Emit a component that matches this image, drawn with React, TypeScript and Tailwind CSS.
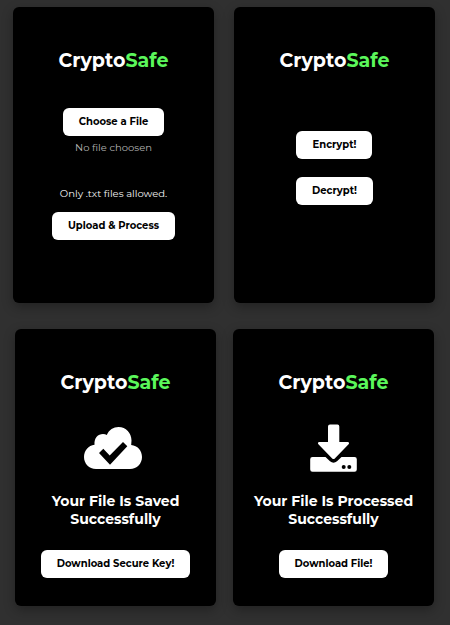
import React from "react";

function Card({ children, className = "" }: { children: React.ReactNode; className?: string }) {
  return (
    <section
      className={`flex min-w-0 flex-1 flex-col items-center rounded-md bg-black pt-10 text-center shadow-[0_4px_12px_rgba(0,0,0,0.3)] ${className}`}
    >
      <h1 className="text-[19px] leading-7 font-bold">
        Crypto<span className="text-[#5bf75b]">Safe</span>
      </h1>
      {children}
    </section>
  );
}

function Button({ children }: { children: React.ReactNode }) {
  return (
    <button type="button" className="h-7 rounded-md bg-white px-4 text-[10px] leading-4 font-bold whitespace-nowrap text-black">
      {children}
    </button>
  );
}

function CloudCheck() {
  return (
    <svg viewBox="0 0 64 42" className="h-[42px] w-16" aria-hidden="true">
      <path
        fill="#fff"
        d="M12 42C5 42 0 36.500 0 30C0 23.500 4.500 18.500 10.500 17.700C10 11 14 7 19 7C20.500 7 21.700 7.300 22.800 7.900C25 3 29.500 0 34.500 0C42 0 47.500 6 47.500 13.500L47.200 18C53.500 18.500 58 23.500 58 30C58 36.500 53 42 46 42Z"
      />
      <path d="M15 26L19.300 21.800L25.700 28.500L39 15L43.300 19.300L26 37.700Z" fill="#000" />
    </svg>
  );
}

function DownloadTray() {
  return (
    <svg viewBox="0 0 47 48" className="h-12 w-[47px]" aria-hidden="true">
      <path
        fill="#fff"
        d="M20 0.500H27.500Q29.300 0.500 29.300 2.500V18H37.500Q40 18.300 38.600 20.300L24.800 34.400Q23.500 35.600 22.200 34.400L8.400 20.300Q7 18.300 9.500 18H18V2.500Q18 0.500 20 0.500Z"
      />
      <path
        fill="#fff"
        d="M2.500 33H15.500L20 37.300Q23.500 40.200 27 37.300L31.500 33H44.500Q46.800 33 46.800 35.200V45.500Q46.800 47.700 44.500 47.700H2.500Q0.200 47.700 0.200 45.500V35.200Q0.200 33 2.500 33Z"
      />
      <circle cx="33.700" cy="43" r="2" fill="#000" />
      <circle cx="39.300" cy="43" r="2" fill="#000" />
    </svg>
  );
}

export default function App() {
  return (
    <main className="min-h-screen bg-[#303030] pt-[7px] pb-[19px] font-['Montserrat','Inter',sans-serif] text-white">
      <div className="flex gap-5 pr-[15px] pl-[13px]">
        <Card className="pb-[63px]">
          <div className="mt-[33px] flex flex-col items-center">
            <Button>Choose a File</Button>
            <p className="mt-1 text-[10px] leading-4 text-[#b3b3b3]">No file choosen</p>
          </div>
          <p className="mt-[30px] mb-[10px] text-[10px] leading-4 text-[#f5f5f5]">Only .txt files allowed.</p>
          <Button>Upload &amp; Process</Button>
        </Card>
        <Card>
          <div className="mt-14 flex flex-col items-center gap-[18px]">
            <Button>Encrypt!</Button>
            <Button>Decrypt!</Button>
          </div>
        </Card>
      </div>

      <div className="mt-[26px] flex gap-[17px] pr-4 pl-[15px]">
        <Card className="pb-7">
          <div className="mt-[27px] flex h-12 items-center">
            <CloudCheck />
          </div>
          <h2 className="mt-5 mb-[22px] text-[14px] leading-[18px] font-bold">
            Your File Is Saved
            <br />
            Successfully
          </h2>
          <Button>Download Secure Key!</Button>
        </Card>
        <Card className="pb-7">
          <div className="mt-[27px] flex h-12 items-center">
            <DownloadTray />
          </div>
          <h2 className="mt-5 mb-[22px] text-[14px] leading-[18px] font-bold">
            Your File Is Processed
            <br />
            Successfully
          </h2>
          <Button>Download File!</Button>
        </Card>
      </div>
    </main>
  );
}
